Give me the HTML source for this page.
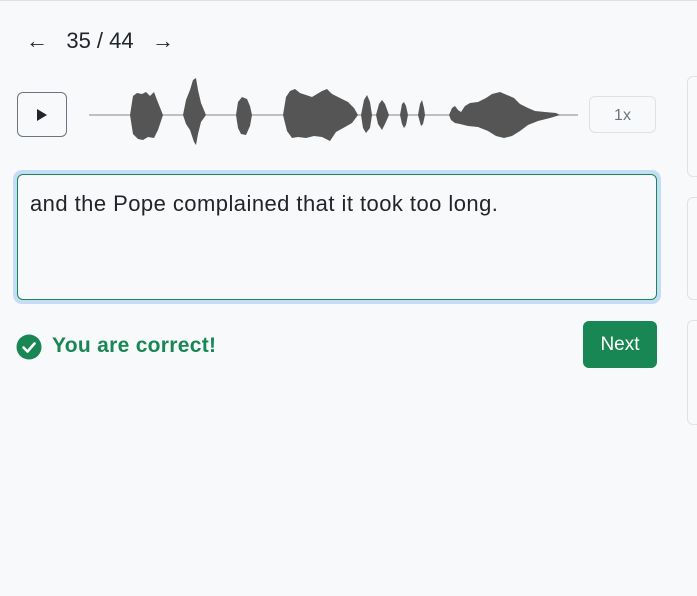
<!DOCTYPE html>
<html><head><meta charset="utf-8"><style>
html,body{margin:0;padding:0}
body{width:697px;height:596px;background:#f8f9fa;position:relative;overflow:hidden;font-family:"Liberation Sans",sans-serif;color:#212529}
.topline{position:absolute;left:0;top:0;width:697px;height:1px;background:#dee2e6}
.nav{position:absolute;top:28px;left:26px;font-size:22px;color:#212529}
.play{position:absolute;left:17px;top:92px;width:50px;height:45px;border:1px solid #6c757d;border-radius:6px;box-sizing:border-box}
.speed{position:absolute;left:589px;top:96px;width:67px;height:37px;border:1px solid #dee2e6;border-radius:6px;box-sizing:border-box;font-size:16px;color:#6c757d;text-align:center;line-height:37px}
.card{position:absolute;left:687px;width:20px;border:1px solid #dee2e6;border-radius:6px;box-sizing:border-box}
.ta{position:absolute;left:13px;top:170px;width:648px;height:134px;border-radius:9px;background:#c5dcf7}
.ta .in{position:absolute;left:4px;top:4px;right:4px;bottom:4px;border:1px solid #198754;border-radius:6px;background:#f8f9fa}
.ta .t{position:absolute;left:12px;top:16px;font-size:22px;letter-spacing:0.45px}
.ok{position:absolute;left:52px;top:334px;font-size:21px;font-weight:bold;color:#198754;letter-spacing:0.3px}
.next{position:absolute;left:583px;top:321px;width:74px;height:47px;background:#198754;border-radius:6px;color:#fff;font-size:19px;text-align:center;line-height:47px}
</style></head><body>
<div class="topline"></div>
<div class="nav">←&nbsp;&nbsp;&nbsp;35 / 44&nbsp;&nbsp;&nbsp;→</div>
<div class="play"><svg width="50" height="45" style="position:absolute;left:-1px;top:-1px"><path d="M20 17 L30 23 L20 29Z" fill="#212529"/></svg></div>
<svg style="position:absolute;left:0;top:0" width="697" height="200">
<line x1="89" y1="115" x2="578" y2="115" stroke="#888" stroke-width="1"/>
<g fill="#555">
<path d="M130 115 L133 96 L137 93 L142 94 L146 92 L150 96 L154 92 L157 100 L163 115 L158 130 L154 138 L148 137 L143 140 L138 139 L133 134Z"/>
<path d="M183 115 L186 100 L190 90 L193 80 L196 78 L198 90 L201 103 L206 115 L201 122 L198 134 L196 145 L194 142 L190 130 L186 124Z"/>
<path d="M236 115 L238 102 L242 97 L247 99 L250 106 L252 115 L250 126 L246 135 L241 134 L238 128Z"/>
<path d="M283 115 L286 97 L290 91 L295 89 L300 93 L306 95 L312 97 L317 94 L322 91 L327 89 L332 94 L340 98 L348 102 L354 108 L358 115 L352 123 L345 127 L336 132 L330 141 L322 137 L314 136 L306 138 L298 137 L292 138 L287 131Z"/>
<path d="M361 115 L364 100 L367 95 L370 102 L372 115 L370 128 L366 133 L363 128Z"/>
<path d="M376 115 L379 104 L382 100 L385 104 L389 115 L385 124 L382 130 L378 124Z"/>
<path d="M400 115 L402 104 L404 102 L406 106 L408 115 L406 125 L404 128 L402 124Z"/>
<path d="M418 115 L420 104 L422 100 L424 108 L425 115 L423 124 L421 126Z"/>
<path d="M449 115 L452 108 L455 106 L458 110 L461 112 L465 106 L470 103 L478 102 L486 98 L492 94 L500 92 L507 95 L514 98 L520 104 L528 108 L535 111 L545 112 L556 113 L560 115 L550 118 L538 121 L528 125 L520 131 L512 136 L504 138 L496 136 L488 131 L478 127 L468 126 L460 124 L455 123 L451 120Z"/>
</g>
</svg>
<div class="speed">1x</div>
<div class="card" style="top:76px;height:101px"></div>
<div class="card" style="top:197px;height:103px"></div>
<div class="card" style="top:320px;height:105px"></div>
<div class="ta"><div class="in"><div class="t">and the Pope complained that it took too long.</div></div></div>
<svg style="position:absolute;left:16px;top:334px" width="26" height="26"><circle cx="13" cy="13" r="12.5" fill="#198754"/><path d="M7.5 13.5 L11.5 17.5 L18.5 9.5" stroke="#fff" stroke-width="2.6" fill="none" stroke-linecap="round" stroke-linejoin="round"/></svg>
<div class="ok">You are correct!</div>
<div class="next">Next</div>
</body></html>
